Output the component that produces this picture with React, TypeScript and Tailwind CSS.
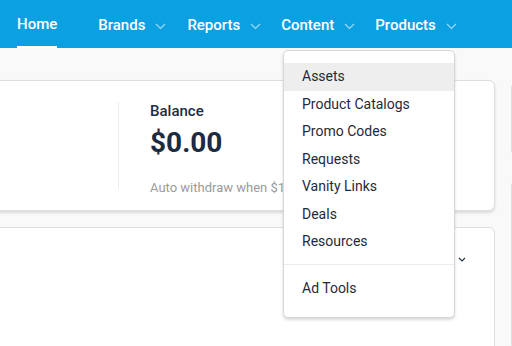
import React from 'react'

function Chevron() {
  return (
    <svg width="11" height="7" viewBox="0 0 11 7" className="ml-[10px] mt-[1px]">
      <path d="M1 1l4.5 4.5L10 1" fill="none" stroke="rgba(255,255,255,0.6)" strokeWidth="1.2" />
    </svg>
  )
}

const items = ['Assets', 'Product Catalogs', 'Promo Codes', 'Requests', 'Vanity Links', 'Deals', 'Resources']

export default function App() {
  return (
    <div className="relative h-[346px] w-[512px] overflow-hidden bg-[#f9f9f9] font-['Roboto',sans-serif]">
      <nav className="flex h-12 items-stretch bg-[#0ba0e1] pt-[3px] text-[15px] font-medium text-white">
        <div className="ml-[17px] flex items-center border-b-2 border-white">Home</div>
        <div className="ml-[41px] flex items-center">
          Brands
          <Chevron />
        </div>
        <div className="ml-[21px] flex items-center">
          Reports
          <Chevron />
        </div>
        <div className="ml-[20px] flex items-center">
          Content
          <Chevron />
        </div>
        <div className="ml-[20px] flex items-center">
          Products
          <Chevron />
        </div>
      </nav>

      <div className="ml-[-20px] flex gap-4">
        <div className="flex w-[515px] shrink-0 flex-col gap-4 pt-8">
          <div className="flex h-[131px] rounded-md border border-[#dedede] bg-white shadow-[0_2px_3px_rgba(0,0,0,0.12)]">
            <div className="my-[21px] w-[138px] border-r border-[#ececec]" />
            <div className="flex flex-col pl-[31px] pt-[20px]">
              <div className="text-[15px] font-medium leading-[20px] text-[#1d2d44]">Balance</div>
              <div className="mt-[6px] text-[28px] font-bold leading-[32px] text-[#1b2b41]">$0.00</div>
              <div className="mt-[21px] text-[13px] leading-[16px] text-[#9b9b9b]">Auto withdraw when $100</div>
            </div>
          </div>
          <div className="relative h-[140px] rounded-md border border-[#dedede] bg-white">
            <svg width="8" height="5" viewBox="0 0 8 5" className="absolute left-[477px] top-[29px]">
              <path d="M1 1l3 3 3-3" fill="none" stroke="#2a3447" strokeWidth="1.2" />
            </svg>
          </div>
        </div>
        <div className="flex w-[60px] shrink-0 flex-col gap-6 pt-[34px]">
          <div className="h-[74px] rounded-md border border-[#dedede] bg-white" />
          <div className="h-[170px] rounded-md border border-[#dedede] bg-white" />
        </div>
      </div>

      <div className="absolute left-[283px] top-[50px] w-[172px] rounded-[5px] border border-[#d3d8dc] bg-white pb-[14px] pt-[12px] text-[14px] text-[#1f2a3b] shadow-[0_2px_3px_rgba(0,0,0,0.15)]">
        {items.map((it, i) => (
          <div key={it} className={`flex h-[27.5px] items-center pl-[18px] ${i === 0 ? 'bg-[#eeeeee]' : ''}`}>
            {it}
          </div>
        ))}
        <div className="mb-[10px] mt-[8px] border-t border-[#ececec]" />
        <div className="flex h-[28.5px] items-center pl-[18px]">Ad Tools</div>
      </div>
    </div>
  )
}
